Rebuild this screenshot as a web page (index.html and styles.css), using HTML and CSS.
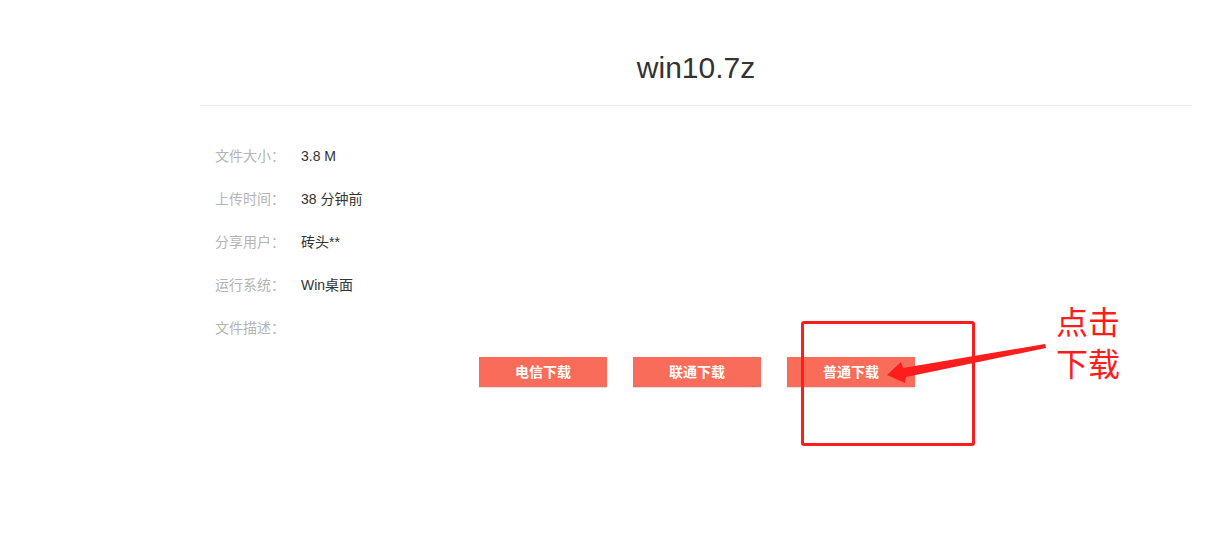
FILE: index.html
```html
<!DOCTYPE html>
<html lang="zh-CN">
<head>
<meta charset="utf-8">
<title>win10.7z</title>
<link rel="stylesheet" href="styles.css">
</head>
<body>
<div class="page">
  <div class="file-box">
    <div class="file-head">
      <h1 class="file-name">win10.7z</h1>
    </div>
    <ul class="info-list">
      <li class="info-row"><span class="info-label">文件大小：</span><span class="info-value">3.8 M</span></li>
      <li class="info-row"><span class="info-label">上传时间：</span><span class="info-value">38 分钟前</span></li>
      <li class="info-row"><span class="info-label">分享用户：</span><span class="info-value">砖头**</span></li>
      <li class="info-row"><span class="info-label">运行系统：</span><span class="info-value">Win桌面</span></li>
      <li class="info-row"><span class="info-label">文件描述：</span><span class="info-value"></span></li>
    </ul>
    <div class="btn-row">
      <a class="dl-btn" href="#">电信下载</a>
      <a class="dl-btn" href="#">联通下载</a>
      <a class="dl-btn" href="#">普通下载</a>
    </div>
  </div>

  <div class="mark-box"></div>
  <svg class="mark-arrow" width="170" height="50" viewBox="0 0 170 50">
    <polygon points="7,40 21,27 23,33 165,9 166,13 26,42 25,48" fill="#ff1c1c"/>
  </svg>
  <div class="mark-text">点击<br>下载</div>
</div>
</body>
</html>
```

FILE: styles.css
```css
* {
  box-sizing: border-box;
}

html, body {
  margin: 0;
  padding: 0;
  background: #fff;
}

body {
  font-family: "Liberation Sans", "Noto Sans CJK SC", Arial, sans-serif;
  color: #333;
}

.page {
  position: relative;
  width: 1220px;
  height: 548px;
}

.file-box {
  width: 992px;
  margin-left: 200px;
}

.file-head {
  padding: 48px 0 17px;
  border-bottom: 1px solid #ececec;
}

.file-name {
  margin: 0;
  text-align: center;
  font-size: 30px;
  line-height: 40px;
  font-weight: normal;
  color: #333;
}

.info-list {
  list-style: none;
  margin: 0;
  padding: 29px 0 0 15px;
}

.info-row {
  display: flex;
  height: 43px;
  line-height: 43px;
  font-size: 14px;
}

.info-label {
  width: 86px;
  color: #b4b4b4;
}

.info-value {
  color: #333;
}

.btn-row {
  display: flex;
  justify-content: center;
  gap: 26px;
  margin-top: 7px;
  padding-left: 2px;
}

.dl-btn {
  display: block;
  width: 128px;
  height: 30px;
  line-height: 30px;
  text-align: center;
  background: #f96c5a;
  color: #fff;
  font-size: 14px;
  font-weight: bold;
  text-decoration: none;
  box-shadow: 0 1px 1px rgba(0, 0, 0, 0.12);
}

.mark-box {
  position: absolute;
  left: 801px;
  top: 321px;
  width: 174px;
  height: 125px;
  border: 3px solid #ff1c1c;
  border-radius: 3px;
}

.mark-arrow {
  position: absolute;
  left: 880px;
  top: 335px;
}

.mark-text {
  position: absolute;
  left: 1056px;
  top: 302px;
  font-size: 32px;
  line-height: 42px;
  color: #ff1c1c;
}
```
